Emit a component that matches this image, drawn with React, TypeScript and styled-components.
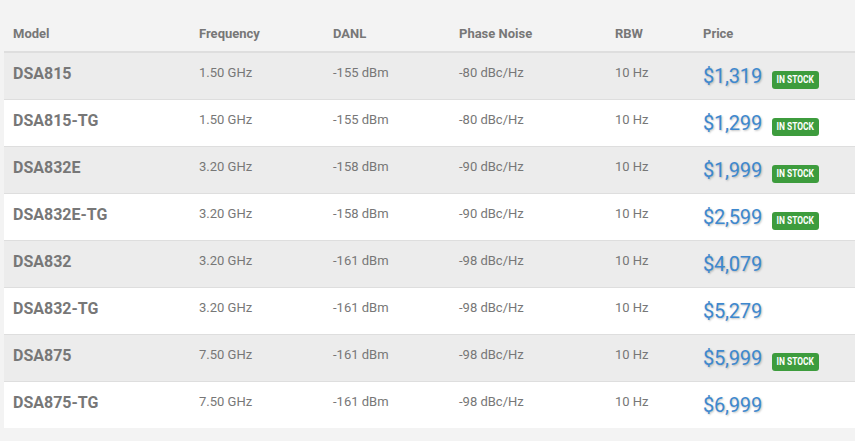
import React from 'react';
import styled, { createGlobalStyle } from 'styled-components';

const GlobalStyle = createGlobalStyle`
  html, body {
    margin: 0;
    padding: 0;
    background: #f3f3f3;
  }
  body {
    font-family: Roboto, "Liberation Sans", Arial, sans-serif;
  }
`;

const Root = styled.div`
  padding: 16px 0 12px 4px;
  overflow: hidden;
`;

const Table = styled.table`
  width: 860px;
  border-collapse: collapse;
  table-layout: fixed;
`;

const HeadCell = styled.th`
  text-align: left;
  font-size: 13px;
  font-weight: 700;
  color: #777;
  padding: 9px 9px 10px;
  height: 16px;
  border-bottom: 2px solid #dedede;
`;

const Row = styled.tr<{ $odd: boolean }>`
  background: ${(p) => (p.$odd ? '#ececec' : '#ffffff')};
  border-bottom: 1px solid #dedede;
  &:last-child {
    border-bottom: none;
  }
`;

const Cell = styled.td`
  box-sizing: border-box;
  padding: 12px 9px 0;
  height: 47px;
  font-size: 13px;
  line-height: 15px;
  color: #777;
  vertical-align: top;
`;

const ModelCell = styled(Cell)`
  font-size: 16px;
  line-height: 18px;
  font-weight: 700;
`;

const PriceCell = styled(Cell)`
  padding-top: 11px;
`;

const PriceWrap = styled.div`
  display: flex;
  align-items: flex-start;
  gap: 10px;
`;

const Price = styled.span`
  font-size: 20px;
  line-height: 24px;
  color: #3d88cf;
  text-shadow: 1px 1px 2px rgba(0, 0, 0, 0.25);
  letter-spacing: -0.2px;
`;

const Badge = styled.span`
  display: inline-flex;
  align-items: center;
  justify-content: center;
  margin-top: 7px;
  background: #3d9c3d;
  height: 18px;
  width: 47px;
  border-radius: 3px;
`;

const BadgeText = styled.span`
  display: inline-block;
  color: #fff;
  font-size: 10px;
  font-weight: 700;
  line-height: 18px;
  white-space: nowrap;
  transform: scaleX(0.84);
`;

interface Product {
  model: string;
  freq: string;
  danl: string;
  phase: string;
  rbw: string;
  price: string;
  inStock: boolean;
}

const products: Product[] = [
  { model: 'DSA815', freq: '1.50 GHz', danl: '-155 dBm', phase: '-80 dBc/Hz', rbw: '10 Hz', price: '$1,319', inStock: true },
  { model: 'DSA815-TG', freq: '1.50 GHz', danl: '-155 dBm', phase: '-80 dBc/Hz', rbw: '10 Hz', price: '$1,299', inStock: true },
  { model: 'DSA832E', freq: '3.20 GHz', danl: '-158 dBm', phase: '-90 dBc/Hz', rbw: '10 Hz', price: '$1,999', inStock: true },
  { model: 'DSA832E-TG', freq: '3.20 GHz', danl: '-158 dBm', phase: '-90 dBc/Hz', rbw: '10 Hz', price: '$2,599', inStock: true },
  { model: 'DSA832', freq: '3.20 GHz', danl: '-161 dBm', phase: '-98 dBc/Hz', rbw: '10 Hz', price: '$4,079', inStock: false },
  { model: 'DSA832-TG', freq: '3.20 GHz', danl: '-161 dBm', phase: '-98 dBc/Hz', rbw: '10 Hz', price: '$5,279', inStock: false },
  { model: 'DSA875', freq: '7.50 GHz', danl: '-161 dBm', phase: '-98 dBc/Hz', rbw: '10 Hz', price: '$5,999', inStock: true },
  { model: 'DSA875-TG', freq: '7.50 GHz', danl: '-161 dBm', phase: '-98 dBc/Hz', rbw: '10 Hz', price: '$6,999', inStock: false },
];

export default function App() {
  return (
    <Root>
      <GlobalStyle />
      <Table>
        <colgroup>
          <col style={{ width: 186 }} />
          <col style={{ width: 134 }} />
          <col style={{ width: 126 }} />
          <col style={{ width: 156 }} />
          <col style={{ width: 88 }} />
          <col />
        </colgroup>
        <thead>
          <tr>
            <HeadCell>Model</HeadCell>
            <HeadCell>Frequency</HeadCell>
            <HeadCell>DANL</HeadCell>
            <HeadCell>Phase Noise</HeadCell>
            <HeadCell>RBW</HeadCell>
            <HeadCell>Price</HeadCell>
          </tr>
        </thead>
        <tbody>
          {products.map((p, i) => (
            <Row key={p.model} $odd={i % 2 === 0}>
              <ModelCell>{p.model}</ModelCell>
              <Cell>{p.freq}</Cell>
              <Cell>{p.danl}</Cell>
              <Cell>{p.phase}</Cell>
              <Cell>{p.rbw}</Cell>
              <PriceCell>
                <PriceWrap>
                  <Price>{p.price}</Price>
                  {p.inStock && (
                    <Badge>
                      <BadgeText>IN STOCK</BadgeText>
                    </Badge>
                  )}
                </PriceWrap>
              </PriceCell>
            </Row>
          ))}
        </tbody>
      </Table>
    </Root>
  );
}
